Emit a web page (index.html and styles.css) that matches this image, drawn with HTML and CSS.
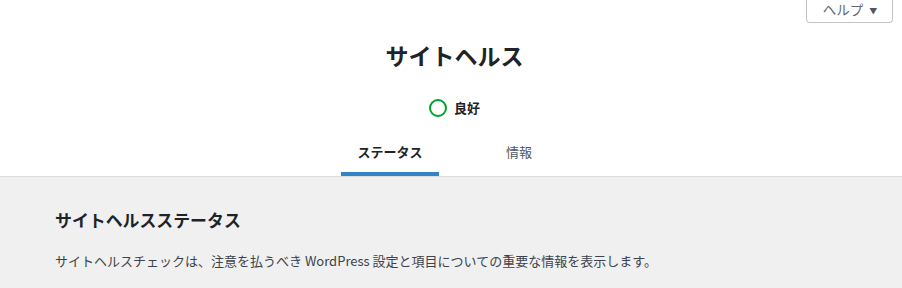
FILE: index.html
```html
<!DOCTYPE html>
<html lang="ja">
<head>
<meta charset="utf-8">
<link rel="stylesheet" href="styles.css">
</head>
<body>
<div class="header">
  <div class="help-row">
    <button class="help-btn">ヘルプ <span class="arrow">▼</span></button>
  </div>
  <h1 class="title">サイトヘルス</h1>
  <div class="status">
    <span class="ring"></span>
    <span class="status-label">良好</span>
  </div>
  <nav class="tabs">
    <a class="tab active">ステータス</a>
    <a class="tab">情報</a>
  </nav>
</div>
<div class="body">
  <h2 class="section-title">サイトヘルスステータス</h2>
  <p class="desc">サイトヘルスチェックは、注意を払うべき WordPress 設定と項目についての重要な情報を表示します。</p>
</div>
</body>
</html>
```

FILE: styles.css
```css
html, body {
  margin: 0;
  padding: 0;
  height: 100%;
}
body {
  font-family: "Noto Sans CJK JP", "Noto Sans", sans-serif;
  background: #f0f0f1;
  color: #3c434a;
  font-size: 13px;
}
.header {
  background: #fff;
  border-bottom: 1px solid #dcdcde;
  display: flex;
  flex-direction: column;
  align-items: center;
  padding-left: 7px;
}
.help-row {
  align-self: stretch;
  display: flex;
  justify-content: flex-end;
  height: 22px;
  padding-right: 9px;
}
.help-btn {
  font-family: inherit;
  font-size: 13.5px;
  color: #646970;
  background: #fff;
  border: 1px solid #c3c4c7;
  border-top: none;
  border-radius: 0 0 4px 4px;
  width: 87px;
  height: 23px;
  padding: 0 0 2px 1px;
  display: flex;
  align-items: center;
  justify-content: center;
  gap: 6px;
  line-height: 1;
}
.arrow {
  font-size: 8px;
  color: #50575e;
  margin-top: 2px;
}
.title {
  margin: 18px 0 0;
  font-size: 23px;
  line-height: 30px;
  font-weight: 600;
  color: #1d2327;
}
.status {
  margin-top: 29px;
  display: flex;
  align-items: center;
  gap: 7px;
  height: 18px;
}
.ring {
  width: 14px;
  height: 14px;
  border: 2px solid #00a32a;
  border-radius: 50%;
}
.status-label {
  font-weight: 600;
  color: #1d2327;
  line-height: 18px;
}
.tabs {
  margin-top: 14px;
  display: grid;
  grid-template-columns: 1fr 1fr;
}
.tab {
  margin: 0 16px;
  padding: 11px 16px 10px;
  line-height: 20px;
  text-align: center;
  border-bottom: 4px solid transparent;
  color: #50575e;
}
.tab.active {
  border-bottom-color: #3582c4;
  font-weight: 600;
  color: #1d2327;
}
.body {
  padding: 31px 55px 0;
}
.section-title {
  margin: 0;
  font-size: 16.9px;
  line-height: 24px;
  font-weight: 600;
  color: #1d2327;
}
.desc {
  margin: 19px 0 0;
  line-height: 20px;
  color: #3c434a;
}
```
